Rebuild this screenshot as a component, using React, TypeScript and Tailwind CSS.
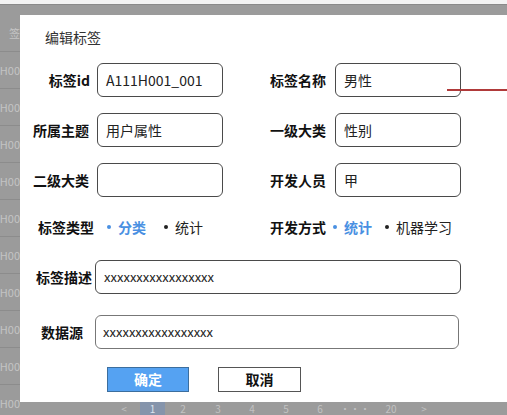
import React from "react";

const font = { fontFamily: '"Noto Sans CJK SC", "Noto Sans", sans-serif' };

function Input({ w, value, small }: { w: string; value: string; small?: boolean }) {
  return (
    <div
      className={`${w} h-[34px] rounded-[6px] border border-[#4a4a4a] bg-white flex items-center pl-[8px] ${
        small ? "text-[13px] pl-[7px]" : "text-[14px]"
      } text-[#222]`}
    >
      {value}
    </div>
  );
}

function Dot({ blue }: { blue?: boolean }) {
  return (
    <span
      className={`inline-block w-[4px] h-[4px] rounded-full mr-[7px] align-middle ${blue ? "bg-[#4a90e2]" : "bg-[#222]"}`}
    />
  );
}

export default function App() {
  const rows = ["签", "H00", "H00", "H00", "H00", "H00", "H00", "H00", "H00", "H00", "H00"];
  const pages = [
    { t: "<", x: "w-[32px]" },
    { t: "1", x: "w-[25px]", active: true },
    { t: "2", x: "w-[36px]" },
    { t: "3", x: "w-[34px]" },
    { t: "4", x: "w-[34px]" },
    { t: "5", x: "w-[34px]" },
    { t: "6", x: "w-[34px]" },
    { t: "···", x: "w-[36px]" },
    { t: "20", x: "w-[36px]" },
    { t: ">", x: "w-[30px]" },
  ];
  return (
    <div className="relative w-[507px] h-[415px] overflow-hidden bg-[#9b9b9b]" style={font}>
      <div className="h-[4px] bg-[#f3f3f3]" />
      <div className="h-[1px] bg-[#8a8a8a]" />
      {/* background table strip */}
      <div className="mt-[10px] w-[20px] flex flex-col">
        {rows.map((r, i) => (
          <div
            key={i}
            className="h-[37px] border-b border-[#8c8c8c] flex items-center justify-end text-[11px] text-[#c4c4c4] overflow-hidden whitespace-nowrap"
          >
            {r}
          </div>
        ))}
      </div>
      {/* pagination */}
      <div className="absolute left-[108px] bottom-0 h-[13px] flex items-center text-[10px] text-[#c2c2c2]">
        {pages.map((p, i) => (
          <div
            key={i}
            className={`${p.x} h-[13px] flex items-center justify-center ${p.active ? "bg-[#8594ab] text-[#dde3ee]" : ""}`}
          >
            {p.t}
          </div>
        ))}
      </div>
      {/* modal */}
      <div className="absolute left-[20px] top-[15px] right-0 h-[387px] bg-white">
        <div className="pl-[25px] pt-[12px] text-[14px] leading-[20px] text-[#333]">编辑标签</div>
        <div className="mt-[16px] flex flex-col">
          <div className="flex items-center h-[34px]">
            <div className="w-[77px] pr-[7px] text-right text-[14px] font-bold text-[#111]">标签id</div>
            <Input w="w-[126px]" value="A111H001_001" />
            <div className="w-[47px]" />
            <div className="w-[65px] text-[14px] font-bold text-[#111]">标签名称</div>
            <Input w="w-[126px]" value="男性" />
          </div>
          <div className="flex items-center h-[34px] mt-[16px]">
            <div className="w-[77px] pr-[8px] text-right text-[14px] font-bold text-[#111]">所属主题</div>
            <Input w="w-[126px]" value="用户属性" />
            <div className="w-[47px]" />
            <div className="w-[65px] text-[14px] font-bold text-[#111]">一级大类</div>
            <Input w="w-[126px]" value="性别" />
          </div>
          <div className="flex items-center h-[34px] mt-[16px]">
            <div className="w-[77px] pr-[8px] text-right text-[14px] font-bold text-[#111]">二级大类</div>
            <Input w="w-[126px]" value="" />
            <div className="w-[47px]" />
            <div className="w-[65px] text-[14px] font-bold text-[#111]">开发人员</div>
            <Input w="w-[126px]" value="甲" />
          </div>
          <div className="flex items-center h-[24px] mt-[18px] text-[14px]">
            <div className="w-[87px] pl-[18px] font-bold text-[#111]">标签类型</div>
            <div className="w-[57px] font-bold text-[#4a90e2] flex items-center">
              <Dot blue />
              分类
            </div>
            <div className="w-[106px] text-[#222] flex items-center">
              <Dot />
              统计
            </div>
            <div className="w-[63px] font-bold text-[#111]">开发方式</div>
            <div className="w-[52px] font-bold text-[#4a90e2] flex items-center">
              <Dot blue />
              统计
            </div>
            <div className="text-[#222] flex items-center">
              <Dot />
              机器学习
            </div>
          </div>
          <div className="flex items-center h-[34px] mt-[21px]">
            <div className="w-[75px] pl-[16px] text-[14px] font-bold text-[#111] whitespace-nowrap">标签描述</div>
            <Input w="w-[366px]" value="xxxxxxxxxxxxxxxxx" small />
          </div>
          <div className="flex items-center h-[34px] mt-[21px]">
            <div className="w-[75px] pl-[21px] text-[14px] font-bold text-[#111]">数据源</div>
            <div className="w-[364px] h-[34px] rounded-[6px] border border-[#777] bg-white flex items-center pl-[7px] text-[13px] text-[#222]">
              xxxxxxxxxxxxxxxxx
            </div>
          </div>
          <div className="flex items-center mt-[18px] pl-[87px]">
            <div className="w-[82px] h-[25px] bg-[#55a2f2] border border-[#3c6e9e] text-white text-[14px] font-bold flex items-center justify-center">
              确定
            </div>
            <div className="ml-[29px] w-[83px] h-[25px] bg-white border border-[#555] text-[#111] text-[14px] font-bold flex items-center justify-center">
              取消
            </div>
          </div>
        </div>
      </div>
      {/* annotation line */}
      <div className="absolute left-[447px] top-[89px] w-[60px] h-[2px] bg-[#b03a3a]" />
    </div>
  );
}
